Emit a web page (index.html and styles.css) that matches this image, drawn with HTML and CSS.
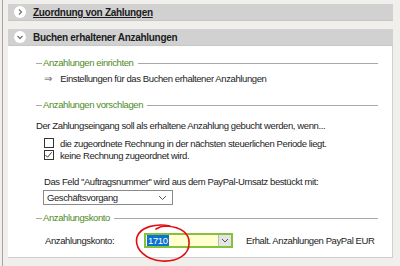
FILE: index.html
```html
<!DOCTYPE html>
<html lang="de">
<head>
    <meta charset="UTF-8">
    <title>Anzahlungen</title>
    <link rel="stylesheet" href="styles.css">
</head>
<body>
    <div class="page">
        <div class="bar">
            <span class="toggle">
                <svg width="12" height="12" viewBox="0 0 12 12"><circle cx="6" cy="6" r="6" fill="#fff"/><path d="M5 3.5 L7.5 6 L5 8.5" fill="none" stroke="#777" stroke-width="1.3"/></svg>
            </span>
            <span class="bar-title link">Zuordnung von Zahlungen</span>
        </div>

        <div class="bar open">
            <span class="toggle">
                <svg width="12" height="12" viewBox="0 0 12 12"><circle cx="6" cy="6" r="6" fill="#fff"/><path d="M3.5 5 L6 7.5 L8.5 5" fill="none" stroke="#777" stroke-width="1.3"/></svg>
            </span>
            <span class="bar-title">Buchen erhaltener Anzahlungen</span>
        </div>

        <div class="panel">
            <div class="legend first">Anzahlungen einrichten</div>
            <div class="row indent">
                <span class="arrow">&rArr;</span>
                <span>Einstellungen für das Buchen erhaltener Anzahlungen</span>
            </div>

            <div class="legend second">Anzahlungen vorschlagen</div>
            <div class="row intro">Der Zahlungseingang soll als erhaltene Anzahlung gebucht werden, wenn...</div>
            <div class="check">
                <span class="box"></span>
                <span>die zugeordnete Rechnung in der nächsten steuerlichen Periode liegt.</span>
            </div>
            <div class="check">
                <span class="box">
                    <svg width="10" height="10" viewBox="0 0 10 10"><path d="M1.5 5 L4 7.5 L8.5 2" fill="none" stroke="#222" stroke-width="1"/></svg>
                </span>
                <span>keine Rechnung zugeordnet wird.</span>
            </div>
            <div class="row indent field-note">Das Feld ''Auftragsnummer'' wird aus dem PayPal-Umsatz bestückt mit:</div>
            <div class="combo">
                <span>Geschäftsvorgang</span>
                <svg width="9" height="6" viewBox="0 0 9 6"><path d="M1 1 L4.5 4.5 L8 1" fill="none" stroke="#555" stroke-width="1"/></svg>
            </div>

            <div class="legend third">Anzahlungskonto</div>
            <div class="konto">
                <span class="konto-label">Anzahlungskonto:</span>
                <div class="konto-input">
                    <span class="selected">1710</span>
                    <span class="drop">
                        <svg width="8" height="5" viewBox="0 0 8 5"><path d="M1 1 L4 4 L7 1" fill="none" stroke="#555" stroke-width="1"/></svg>
                    </span>
                    <svg class="scribble" width="60" height="40" viewBox="0 0 60 40"><path d="M36 3 C22 0 6 4 3 14 C0 26 12 37 28 38 C44 39 55 31 55 21 C56 11 48 4 32 3 C28 3 25 4 22 6" fill="none" stroke="#e01010" stroke-width="1.6" stroke-linecap="round"/></svg>
                </div>
                <span class="konto-name">Erhalt. Anzahlungen PayPal EUR</span>
            </div>
        </div>
    </div>
</body>
</html>
```

FILE: styles.css
```css
html, body {
    margin: 0;
    padding: 0;
}

body {
    background: #f0efec;
    font-family: "Liberation Sans", Arial, sans-serif;
    font-size: 9.5px;
    letter-spacing: -0.4px;
    color: #1c1c1c;
    width: 400px;
    height: 266px;
    overflow: hidden;
    white-space: nowrap;
}

.page {
    border-left: 1px solid #a4a4a4;
    margin-left: 2px;
    padding: 4px 7px 0 5px;
    height: 262px;
}

.bar {
    display: flex;
    align-items: center;
    height: 16px;
    background: #d1d1d1;
    border-bottom: 1px solid #c6c6c6;
    margin-bottom: 8px;
}

.bar.open {
    margin-bottom: 0;
}

.toggle {
    display: flex;
    margin-left: 6px;
    width: 12px;
    height: 12px;
}

.bar-title {
    margin-left: 7px;
    font-weight: bold;
    font-size: 10px;
    letter-spacing: -0.3px;
}

.link {
    text-decoration: underline;
}

.panel {
    position: relative;
    background: #fff;
    border-right: 1px solid #cfcfcf;
    border-bottom: 1px solid #cfcfcf;
    padding: 10px 14px 0 28px;
    height: 201px;
}

.legend {
    display: flex;
    align-items: center;
    color: #4e8a1c;
    height: 14px;
    line-height: 14px;
}

.legend::before {
    content: "";
    width: 6px;
    border-top: 1px solid #a8a8a8;
    margin-right: 1px;
}

.legend::after {
    content: "";
    flex: 1;
    border-top: 1px solid #a8a8a8;
    margin-left: 4px;
}

.second {
    margin-top: 12px;
}

.third {
    margin-top: 6px;
}

.row {
    height: 14px;
    line-height: 14px;
}

.indent {
    padding-left: 8px;
}

.arrow {
    display: inline-block;
    width: 14px;
    color: #555;
}

.first + .row {
    margin-top: 2px;
}

.intro {
    margin-top: 7px;
}

.check {
    display: flex;
    align-items: center;
    height: 12px;
    padding-left: 8px;
}

.intro + .check {
    margin-top: 4px;
}

.box {
    display: flex;
    flex-shrink: 0;
    width: 10px;
    height: 10px;
    box-sizing: border-box;
    border: 1px solid #333;
    margin-right: 6px;
}

.box svg {
    margin: -1px 0 0 -1px;
}

.field-note {
    margin-top: 14px;
}

.combo {
    display: flex;
    align-items: center;
    justify-content: space-between;
    margin: 1px 0 0 7px;
    width: 130px;
    height: 15px;
    box-sizing: border-box;
    border: 1px solid #8a8a8a;
    padding: 0 5px 0 3px;
    line-height: 13px;
}

.konto {
    display: flex;
    align-items: center;
    margin-top: 7px;
    padding-left: 9px;
    height: 16px;
}

.konto-label {
    flex-shrink: 0;
    width: 99px;
}

.konto-input {
    position: relative;
    flex-shrink: 0;
    display: flex;
    align-items: center;
    justify-content: space-between;
    width: 89px;
    height: 15px;
    box-sizing: border-box;
    border: 2px solid #86c13e;
    background: #ffffcf;
    padding-left: 1px;
}

.selected {
    background: #0a72d0;
    color: #fff;
    line-height: 11px;
    padding: 0 1px;
}

.drop {
    display: flex;
    align-items: center;
    justify-content: center;
    width: 12px;
    height: 11px;
    background: #e4e4e4;
    border-left: 1px solid #b9b9b9;
}

.scribble {
    position: absolute;
    left: -12px;
    top: -12px;
}

.konto-name {
    margin-left: 13px;
}
```
